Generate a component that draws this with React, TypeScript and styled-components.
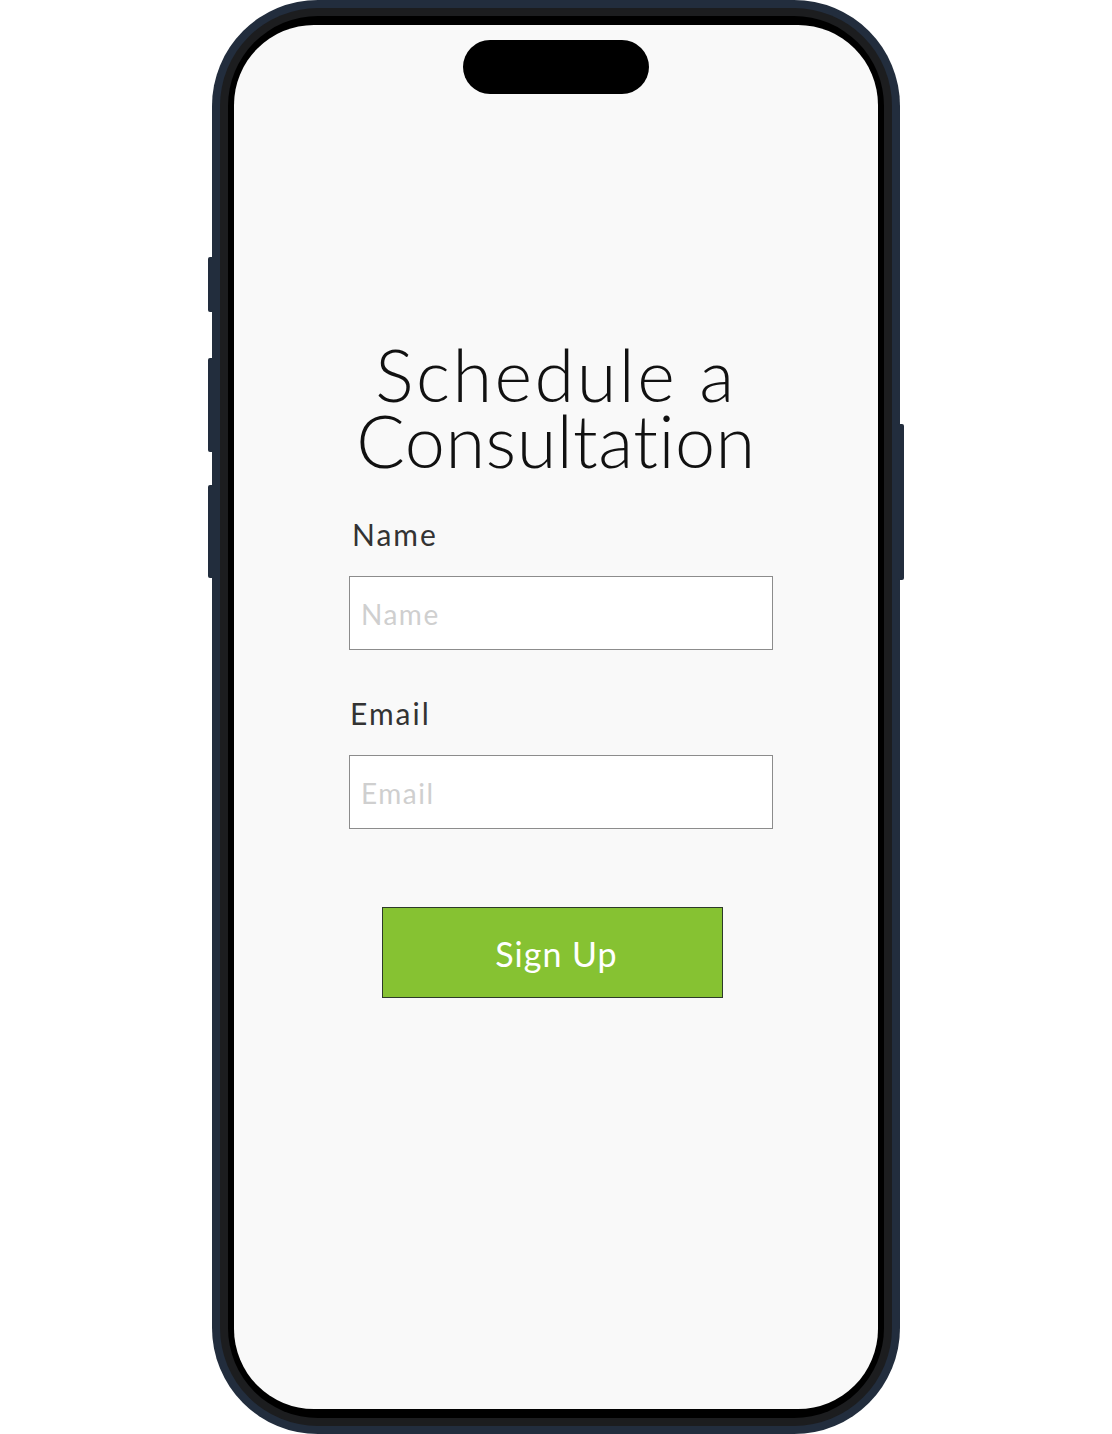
import React from "react";
import styled, { createGlobalStyle } from "styled-components";

const GlobalStyle = createGlobalStyle`
  html, body {
    margin: 0;
    padding: 0;
    background: #ffffff;
  }
  body {
    font-family: "Lato", "Noto Sans", sans-serif;
  }
  * {
    box-sizing: border-box;
  }
`;

const Page = styled.div`
  width: 1112px;
  height: 1434px;
  display: flex;
  justify-content: center;
  align-items: flex-start;
`;

const Shell = styled.div`
  position: relative;
  width: 688px;
  height: 1434px;
  background: #222d3d;
  border-radius: 106px;
  padding: 8px;
`;

const SideButton = styled.span<{ side: "left" | "right"; top: number; h: number }>`
  position: absolute;
  ${({ side }) => (side === "left" ? "left: -4px;" : "right: -4px;")}
  top: ${({ top }) => top}px;
  height: ${({ h }) => h}px;
  width: 6px;
  background: #222d3d;
  border-radius: 2px;
`;

const Bezel = styled.div`
  height: 100%;
  background: #1c1d1f;
  border-radius: 98px;
  padding: 8px;
`;

const Rim = styled.div`
  height: 100%;
  background: #000000;
  border-radius: 90px;
  padding: 9px 6px;
`;

const Screen = styled.div`
  height: 100%;
  background: #f9f9f9;
  border-radius: 80px;
  display: flex;
  flex-direction: column;
  align-items: center;
  overflow: hidden;
`;

const Island = styled.div`
  margin-top: 15px;
  width: 186px;
  height: 54px;
  border-radius: 27px;
  background: #000;
  flex-shrink: 0;
`;

const Title = styled.h1`
  margin: 247px 0 0;
  font-family: "Lato", sans-serif;
  font-weight: 300;
  font-size: 72px;
  line-height: 66px;
  color: #111;
  text-align: center;
`;

const TitleLine = styled.span<{ spacing: number }>`
  display: block;
  letter-spacing: ${({ spacing }) => spacing}px;
`;

const Form = styled.form`
  align-self: flex-start;
  margin-left: 115px;
  width: 424px;
  display: flex;
  flex-direction: column;
`;

const Label = styled.label<{ gap: number; indent: number }>`
  margin-top: ${({ gap }) => gap}px;
  padding-left: ${({ indent }) => indent}px;
  font-family: "Lato", sans-serif;
  font-weight: 400;
  font-size: 30px;
  line-height: 34px;
  letter-spacing: 2px;
  color: #333;
`;

const Input = styled.input`
  margin-top: 25px;
  width: 424px;
  height: 74px;
  border: 1px solid #8c8c8c;
  background: #ffffff;
  padding: 2px 11px 0;
  font-family: "Lato", sans-serif;
  font-size: 28px;
  letter-spacing: 1.5px;
  color: #222;
  outline: none;
  border-radius: 0;

  &::placeholder {
    color: #cfcfcf;
  }
`;

const SubmitButton = styled.button`
  margin: 78px 0 0 33px;
  width: 341px;
  height: 91px;
  padding: 2px 0 0 8px;
  background: #86c232;
  border: 1px solid #2d3a2a;
  border-radius: 0;
  color: #ffffff;
  font-family: "Lato", sans-serif;
  font-weight: 400;
  font-size: 34px;
  letter-spacing: 1px;
  cursor: pointer;
`;

export default function App() {
  return (
    <>
      <GlobalStyle />
      <Page>
        <Shell>
          <SideButton side="left" top={257} h={55} />
          <SideButton side="left" top={358} h={94} />
          <SideButton side="left" top={485} h={93} />
          <SideButton side="right" top={424} h={156} />
          <Bezel>
            <Rim>
              <Screen>
                <Island />
                <Title>
                  <TitleLine spacing={2.5}>Schedule a</TitleLine>
                  <TitleLine spacing={0.5}>Consultation</TitleLine>
                </Title>
                <Form onSubmit={(e) => e.preventDefault()}>
                  <Label gap={44} indent={3}>
                    Name
                  </Label>
                  <Input type="text" placeholder="Name" />
                  <Label gap={46} indent={1}>
                    Email
                  </Label>
                  <Input type="email" placeholder="Email" />
                  <SubmitButton type="submit">Sign Up</SubmitButton>
                </Form>
              </Screen>
            </Rim>
          </Bezel>
        </Shell>
      </Page>
    </>
  );
}
